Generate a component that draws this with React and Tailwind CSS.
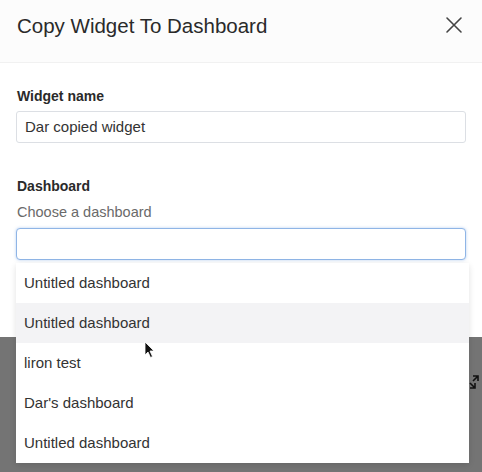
import React from 'react';

const dashboards = [
  "Untitled dashboard",
  "Untitled dashboard",
  "liron test",
  "Dar's dashboard",
  "Untitled dashboard",
];

const App = () => {
  return (
    <div className="relative w-full h-[472px] overflow-hidden bg-[#747474] font-['Liberation_Sans',Arial,sans-serif]">
      <div className="bg-white h-[337px]">
        <div className="h-[63px] bg-[#fcfcfc] border-b border-[#f1f1f1] flex items-center justify-between pl-[17px] pr-[19px]">
          <h1 className="text-[20.5px] leading-[24px] text-[#2a2a2a] -mt-[11px]">Copy Widget To Dashboard</h1>
          <svg width="18" height="18" viewBox="0 0 18 18" className="-mt-[12px]">
            <path d="M2 2 L16 16 M16 2 L2 16" stroke="#444" strokeWidth="1.6" strokeLinecap="round" />
          </svg>
        </div>

        <div className="px-4 pt-[25px]">
          <label className="block text-[14px] leading-[16px] font-bold text-[#2a2a2a] pl-[1px]">Widget name</label>
          <div className="mt-[7px] h-[32px] border border-[#dcdfe4] rounded-[3px] flex items-center px-[8px] text-[15px] text-[#333]">
            Dar copied widget
          </div>

          <label className="block mt-[35px] text-[14px] leading-[16px] font-bold text-[#2a2a2a] pl-[1px]">Dashboard</label>
          <div className="mt-[9px] text-[14.5px] leading-[18px] text-[#6a6a6a] pl-[1px]">Choose a dashboard</div>
          <div className="mt-[7px] h-[32px] border border-[#8fb5e6] rounded-[4px] shadow-[0_0_3px_rgba(110,160,230,0.5)] bg-white"></div>
        </div>
      </div>

      <div className="absolute left-4 top-[263px] w-[453px] bg-white shadow-[0_2px_6px_rgba(0,0,0,0.12)] rounded-[3px]">
        {dashboards.map((name, i) => (
          <div
            key={i}
            className={`h-[40px] flex items-center pl-[8px] text-[15px] text-[#333] ${i === 1 ? 'bg-[#f3f3f5]' : 'bg-white'}`}
          >
            {name}
          </div>
        ))}
      </div>

      <svg className="absolute left-[144px] top-[341px]" width="12" height="18" viewBox="0 0 12 18">
        <path d="M1 1 L1 14 L4 11 L6.5 16.5 L8.5 15.5 L6 10 L10 10 Z" fill="#111" stroke="#fff" strokeWidth="0.8" />
      </svg>

      <svg className="absolute left-[468px] top-[374px]" width="12" height="16" viewBox="0 0 12 16">
        <path d="M5 2 L10 2 L10 7 M10 2 L5 7" stroke="#111" strokeWidth="1.6" fill="none" />
        <path d="M2 9 L7 14 M7 9 L7 14 L2 14" stroke="#111" strokeWidth="1.6" fill="none" />
      </svg>
    </div>
  );
};

export default App;
